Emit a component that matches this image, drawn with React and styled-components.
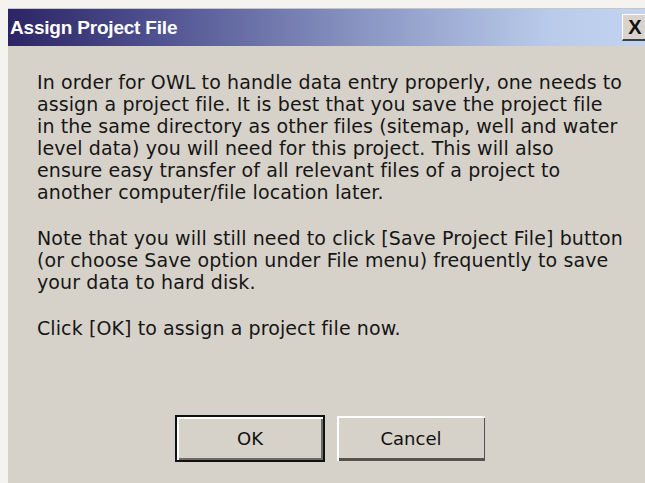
import React from 'react'
import styled, { createGlobalStyle } from 'styled-components'

const GlobalStyle = createGlobalStyle`
  html, body {
    margin: 0;
    padding: 0;
    background: #f4f3f0;
  }
  body {
    padding: 8px 0 0 8px;
    font-family: Tahoma, 'DejaVu Sans', sans-serif;
  }
`

const Dialog = styled.div`
  width: 637px;
  height: 475px;
  display: flex;
  flex-direction: column;
  background: #d6d2c9;
  border-top: 1px solid #c9c6c0;
  box-sizing: border-box;
`

const TitleBar = styled.div`
  height: 37px;
  display: flex;
  align-items: center;
  justify-content: space-between;
  padding-left: 2px;
  background: linear-gradient(90deg, #2c2464 0%, #4d4f8e 22%, #8994c2 55%, #b9cbea 85%, #c2d4f0 100%);
`

const Title = styled.span`
  color: #fff;
  font-family: 'Liberation Sans', Arial, sans-serif;
  font-weight: bold;
  font-size: 19px;
  letter-spacing: -0.2px;
`

const CloseButton = styled.div`
  width: 30px;
  height: 27px;
  margin-right: -7px;
  display: flex;
  align-items: center;
  justify-content: center;
  background: #d8d4cb;
  border-top: 1px solid #fff;
  border-left: 1px solid #fff;
  border-bottom: 2px solid #404040;
  box-sizing: border-box;
  font-family: 'Liberation Sans', Arial, sans-serif;
  font-size: 20px;
  font-weight: bold;
  color: #111;
  padding-right: 5px;
`

const Body = styled.div`
  flex: 1;
  display: flex;
  flex-direction: column;
  padding: 25px 0 0 29px;
`

const Paragraph = styled.p`
  margin: 0 0 24px;
  font-family: 'DejaVu Sans', Tahoma, sans-serif;
  font-size: 19px;
  line-height: 22px;
  color: #161616;
  white-space: nowrap;
  letter-spacing: 0.1px;
`

const Buttons = styled.div`
  display: flex;
  gap: 12px;
  margin-top: 52px;
  padding-left: 138px;
`

const Button = styled.button`
  width: ${(p) => (p.$default ? '150px' : '148px')};
  height: ${(p) => (p.$default ? '47px' : '45px')};
  margin-top: ${(p) => (p.$default ? '0' : '1px')};
  background: #d6d2c9;
  font-family: 'DejaVu Sans', Tahoma, sans-serif;
  font-size: 18px;
  color: #111;
  padding: 0;
  box-sizing: border-box;
  border: ${(p) => (p.$default ? '2px solid #111' : 'none')};
  box-shadow: ${(p) =>
    p.$default
      ? 'inset 2px 2px 0 #fff, inset -2px -2px 0 #6e6b66'
      : 'inset 2px 2px 0 #fff, inset -1px -3px 0 #55524d'};
`

const lines1 = [
  'In order for OWL to handle data entry properly, one needs to',
  'assign a project file. It is best that you save the project file',
  'in the same directory as other files (sitemap, well and water',
  'level data) you will need for this project. This will also',
  'ensure easy transfer of all relevant files of a project to',
  'another computer/file location later.',
]

const lines2 = [
  'Note that you will still need to click [Save Project File] button',
  '(or choose Save option under File menu) frequently to save',
  'your data to hard disk.',
]

const App = () => (
  <>
    <GlobalStyle />
    <Dialog>
      <TitleBar>
        <Title>Assign Project File</Title>
        <CloseButton>X</CloseButton>
      </TitleBar>
      <Body>
        <Paragraph>
          {lines1.map((l) => (
            <React.Fragment key={l}>
              {l}
              <br />
            </React.Fragment>
          ))}
        </Paragraph>
        <Paragraph>
          {lines2.map((l) => (
            <React.Fragment key={l}>
              {l}
              <br />
            </React.Fragment>
          ))}
        </Paragraph>
        <Paragraph>Click [OK] to assign a project file now.</Paragraph>
        <Buttons>
          <Button $default>OK</Button>
          <Button>Cancel</Button>
        </Buttons>
      </Body>
    </Dialog>
  </>
)

export default App
